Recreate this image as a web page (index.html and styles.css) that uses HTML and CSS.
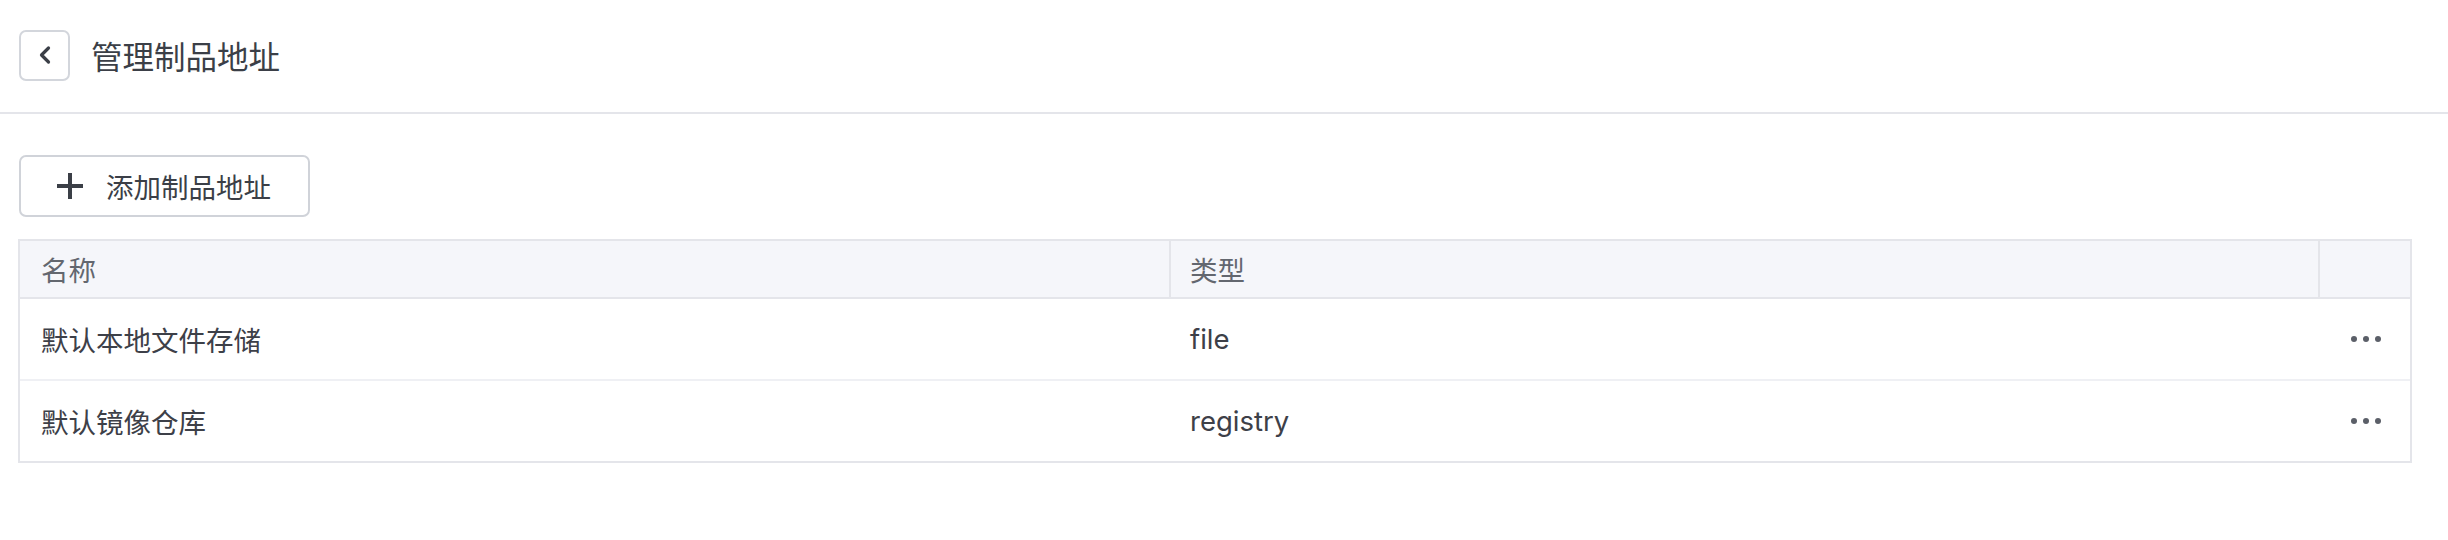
FILE: index.html
```html
<!DOCTYPE html>
<html lang="zh-CN">
<head>
<meta charset="utf-8">
<title>管理制品地址</title>
<link rel="stylesheet" href="styles.css">
</head>
<body>
<header class="page-header">
  <button class="back-btn" aria-label="返回">
    <svg width="20" height="20" viewBox="0 0 20 20"><path d="M13.5 3 L6.5 10 L13.5 17" fill="none" stroke="#3b3f47" stroke-width="3.2" stroke-linecap="round" stroke-linejoin="round"/></svg>
  </button>
  <h1 class="page-title">管理制品地址</h1>
</header>
<main class="content">
  <button class="add-btn">
    <svg class="plus" width="28" height="28" viewBox="0 0 28 28"><path d="M14 1 V27 M1 14 H27" stroke="#3b3f47" stroke-width="4"/></svg>
    <span>添加制品地址</span>
  </button>
  <div class="table">
    <div class="row head">
      <div class="cell">名称</div>
      <div class="cell divider">类型</div>
      <div class="cell divider"></div>
    </div>
    <div class="row">
      <div class="cell">默认本地文件存储</div>
      <div class="cell">file</div>
      <div class="cell action"><svg width="30" height="6" viewBox="0 0 30 6"><circle cx="3" cy="3" r="3"/><circle cx="15" cy="3" r="3"/><circle cx="27" cy="3" r="3"/></svg></div>
    </div>
    <div class="row last">
      <div class="cell">默认镜像仓库</div>
      <div class="cell">registry</div>
      <div class="cell action"><svg width="30" height="6" viewBox="0 0 30 6"><circle cx="3" cy="3" r="3"/><circle cx="15" cy="3" r="3"/><circle cx="27" cy="3" r="3"/></svg></div>
    </div>
  </div>
</main>
</body>
</html>
```

FILE: styles.css
```css
* { box-sizing: border-box; }
body {
  margin: 0;
  background: #ffffff;
  font-family: Inter, "Noto Sans CJK SC", sans-serif;
  color: #3d4048;
}
.page-header {
  height: 114px;
  display: flex;
  align-items: center;
  gap: 21px;
  padding: 0 0 2px 19px;
  border-bottom: 2px solid #e4e5ea;
}
.back-btn {
  width: 51px;
  height: 51px;
  border: 2px solid #d3d6dc;
  border-radius: 7px;
  background: #fff;
  display: flex;
  align-items: center;
  justify-content: center;
  padding: 0;
}
.page-title {
  margin: 0;
  font-size: 31.5px;
  font-weight: 400;
  color: #3b3f47;
}
.content {
  padding: 41px 36px 0 18px;
}
.add-btn {
  height: 62px;
  width: 291px;
  margin-left: 1px;
  border: 2px solid #d0d3d9;
  border-radius: 7px;
  background: #fff;
  display: flex;
  align-items: center;
  gap: 22px;
  padding: 0 0 0 35px;
  font-family: inherit;
  font-size: 27.5px;
  color: #3b3f47;
}
.add-btn .plus { flex: none; }
.table {
  margin-top: 22px;
  border: 2px solid #e4e5ea;
}
.row {
  display: grid;
  grid-template-columns: 1149px 1149px 1fr;
  height: 82px;
  border-bottom: 2px solid #eff0f4;
  font-size: 27.5px;
}
.row.last { border-bottom: none; height: 80px; }
.row.head {
  height: 58px;
  background: #f5f6fa;
  border-bottom: 2px solid #e4e5ea;
  color: #63676f;
}
.cell {
  display: flex;
  align-items: center;
  padding-left: 21px;
}
.cell.divider {
  border-left: 2px solid #e4e5ea;
  padding-left: 19px;
}
.row:not(.head) .cell:nth-child(2) { padding-left: 21px; }
.cell.action {
  justify-content: center;
  padding-left: 4px;
  fill: #5b5f68;
}
```
